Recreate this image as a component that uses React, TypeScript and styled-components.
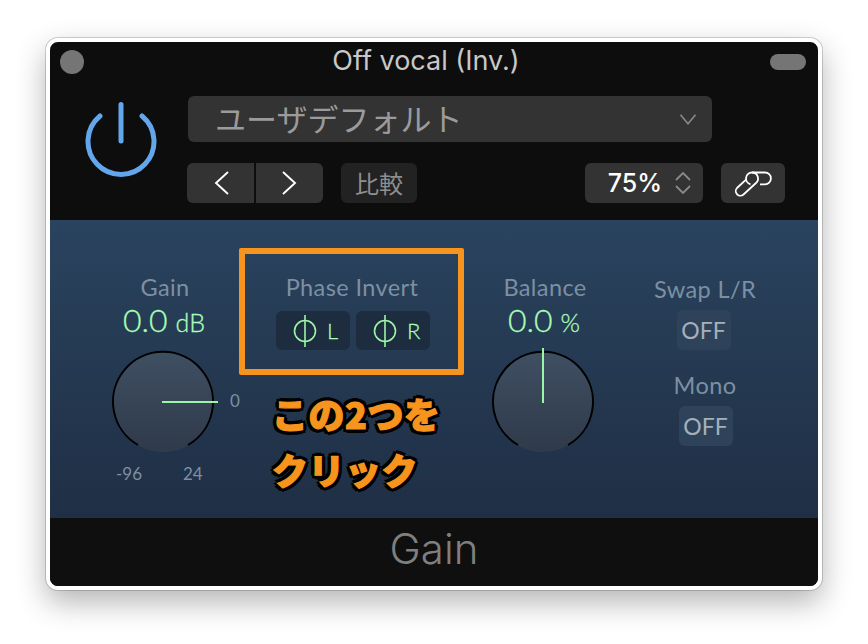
import styled, { createGlobalStyle } from "styled-components";

const GlobalStyle = createGlobalStyle`
  html, body {
    margin: 0;
    background: #fff;
  }
  * {
    box-sizing: border-box;
  }
`;

const Page = styled.div`
  width: 868px;
  height: 644px;
  padding: 38px 46px;
  overflow: hidden;
`;

const Window = styled.div`
  width: 776px;
  height: 552px;
  border: 4px solid #fff;
  border-radius: 12px;
  background: #0d0d0d;
  overflow: hidden;
  display: flex;
  flex-direction: column;
  box-shadow: 0 0 0 1px rgba(0, 0, 0, 0.17), 0 12px 30px rgba(0, 0, 0, 0.3);
`;

const Header = styled.header`
  height: 178px;
  flex: none;
  padding-top: 8px;
`;

const TitleRow = styled.div`
  display: flex;
  align-items: center;
  justify-content: space-between;
  height: 24px;
  padding: 0 12px 0 10px;
`;

const Dot = styled.span`
  width: 24px;
  height: 24px;
  border-radius: 50%;
  background: #757575;
`;

const Title = styled.div`
  font: 400 27px/24px Inter, "Liberation Sans", sans-serif;
  color: #c8c8c8;
  position: relative;
  top: -1px;
  left: -1px;
`;

const Pill = styled.span`
  width: 36px;
  height: 16px;
  border-radius: 8px;
  background: #757575;
`;

const Controls = styled.div`
  display: flex;
  padding: 22px 0 0 35px;
  gap: 28px;
`;

const PowerIcon = styled.svg`
  width: 74px;
  height: 80px;
  flex: none;
  margin-top: 4px;
`;

const ControlStack = styled.div`
  width: 598px;
  display: flex;
  flex-direction: column;
  gap: 21px;
`;

const Dropdown = styled.div`
  height: 46px;
  width: 524px;
  margin-left: 1px;
  background: #333;
  border-radius: 6px;
  display: flex;
  align-items: center;
  justify-content: space-between;
  padding: 0 14px 2px 27px;
  font: 400 31px/44px "Noto Sans CJK JP", sans-serif;
  color: #9b9b9b;
`;

const Toolbar = styled.div`
  display: flex;
  align-items: stretch;
  gap: 18px;
  height: 40px;
`;

const NavGroup = styled.div`
  width: 136px;
  display: flex;
  gap: 2px;
`;

const NavButton = styled.div`
  flex: 1;
  background: #333;
  display: flex;
  align-items: center;
  justify-content: center;
  &:first-child {
    border-radius: 6px 0 0 6px;
    padding-left: 2px;
  }
  &:last-child {
    border-radius: 0 6px 6px 0;
    padding-right: 2px;
  }
`;

const CompareButton = styled.div`
  width: 76px;
  background: #222;
  border-radius: 6px;
  font: 400 24px/40px "Noto Sans CJK JP", sans-serif;
  color: #8f8f8f;
  text-align: center;
`;

const ZoomBox = styled.div`
  width: 118px;
  margin-left: auto;
  background: #333;
  border-radius: 6px;
  display: flex;
  align-items: center;
  justify-content: flex-end;
  gap: 13px;
  padding-right: 12px;
  font: 500 25px/40px Inter, "Liberation Sans", sans-serif;
  color: #fff;
`;

const LinkButton = styled.div`
  width: 64px;
  background: #333;
  border-radius: 6px;
  display: flex;
  align-items: center;
  justify-content: center;
`;

const Panel = styled.main`
  flex: 1;
  display: flex;
  padding-left: 50px;
  background: linear-gradient(#2a435e, #1f2f45);
`;

const Column = styled.section<{ $width: number; $left?: number; $top?: number }>`
  width: ${(p) => p.$width}px;
  margin-left: ${(p) => p.$left ?? 0}px;
  flex: none;
  display: flex;
  flex-direction: column;
  align-items: center;
  padding-top: ${(p) => p.$top ?? 51}px;
  position: relative;
`;

const Label = styled.div`
  font: 400 23.5px/32px Lato, "Open Sans", sans-serif;
  color: #7c90a3;
  letter-spacing: 0.4px;
  white-space: nowrap;
`;

const Value = styled.div`
  margin-left: -2px;
  font: 300 32px/34px Lato, "Open Sans", sans-serif;
  color: #a8ffb6;
  -webkit-text-stroke: 0.3px #a8ffb6;
  white-space: nowrap;
  & > small {
    font-size: 25px;
    margin-left: 8px;
  }
`;

const Knob = styled.div`
  width: 120px;
  height: 116px;
  margin: 3px 0 0 -4px;
  position: relative;
`;

const KnobMark = styled.span<{ $x: number; $y: number }>`
  position: absolute;
  left: ${(p) => p.$x}px;
  top: ${(p) => p.$y}px;
  font: 400 17px/18px Lato, "Open Sans", sans-serif;
  color: #7c90a3;
`;

const Highlight = styled.div`
  position: absolute;
  left: -1px;
  top: 28px;
  width: 225px;
  height: 127px;
  border: 6px solid #f7941d;
  border-radius: 2px;
`;

const PhaseRow = styled.div`
  display: flex;
  gap: 6px;
  margin: 8px 0 0 2px;
`;

const PhaseButton = styled.div`
  width: 74px;
  height: 39px;
  border-radius: 6px;
  background: #1d2c3e;
  display: flex;
  align-items: center;
  gap: 10px;
  padding-left: 17px;
  font: 300 22px/39px Lato, "Open Sans", sans-serif;
  color: #a8ffb6;
  -webkit-text-stroke: 0.3px #a8ffb6;
`;

const Callout = styled.div`
  align-self: flex-start;
  margin: 35px 0 0 32px;
  font: 900 36px/56px "Noto Sans CJK JP", sans-serif;
  letter-spacing: 0.5px;
  color: #f7941d;
  -webkit-text-stroke: 1.2px #f7941d;
  text-shadow:
    4px 0 0 #000, -4px 0 0 #000, 0 4px 0 #000, 0 -4px 0 #000,
    3px 3px 0 #000, -3px 3px 0 #000, 3px -3px 0 #000, -3px -3px 0 #000;
  white-space: nowrap;
`;

const ToggleLabel = styled(Label)<{ $shift?: number }>`
  margin-left: ${(p) => p.$shift ?? 0}px;
`;

const Toggle = styled.div<{ $shift?: number }>`
  width: 54px;
  height: 40px;
  margin: 5px 0 19px ${(p) => p.$shift ?? 0}px;
  background: #2e435a;
  border-radius: 6px;
  font: 400 23px/40px Lato, "Open Sans", sans-serif;
  color: #a5b0bb;
  text-align: center;
`;

const Footer = styled.footer`
  height: 68px;
  flex: none;
  background: #0f0f0f;
  text-align: center;
  font: 300 42px/62px Inter, "Liberation Sans", sans-serif;
  color: #7f7f7f;
`;

function Chevron({ dir, size = 24, color = "#fff" }: { dir: "left" | "right" | "down"; size?: number; color?: string }) {
  const points = {
    left: "18,1 6,12 18,23",
    right: "6,1 18,12 6,23",
    down: "3,8 12,19 21,8",
  }[dir];
  return (
    <svg width={size} height={size} viewBox="0 0 24 24" fill="none">
      <polyline points={points} stroke={color} strokeWidth={1.9} />
    </svg>
  );
}

function PhaseIcon() {
  return (
    <svg width="24" height="34" viewBox="0 0 24 34" fill="none" stroke="#9bf5a8" strokeWidth="1.6">
      <circle cx="12" cy="17" r="10.5" />
      <line x1="12" y1="1" x2="12" y2="33" />
    </svg>
  );
}

function DialKnob({ id, pointer }: { id: string; pointer: [number, number, number, number] }) {
  const [x1, y1, x2, y2] = pointer;
  return (
    <svg width="120" height="116" viewBox="0 0 120 116" fill="none">
      <defs>
        <linearGradient id={id} x1="0" y1="0" x2="0" y2="1">
          <stop offset="0" stopColor="#3f4f62" />
          <stop offset="1" stopColor="#2f3a4a" />
        </linearGradient>
      </defs>
      <circle cx="60" cy="60" r="50" fill={`url(#${id})`} />
      <path d="M35 103 A50 50 0 1 1 85 103" stroke="#000" strokeWidth="2" />
      <line x1={x1} y1={y1} x2={x2} y2={y2} stroke="#9bf5a8" strokeWidth="2" />
    </svg>
  );
}

export default function App() {
  return (
    <Page>
      <GlobalStyle />
      <Window>
        <Header>
          <TitleRow>
            <Dot />
            <Title>Off vocal (Inv.)</Title>
            <Pill />
          </TitleRow>
          <Controls>
            <PowerIcon viewBox="0 0 74 80" fill="none" stroke="#63a6ec" strokeLinecap="round">
              <line x1="36" y1="4.5" x2="36" y2="41" strokeWidth="5" />
              <path d="M15 16 A33 33 0 1 0 57 16" strokeWidth="5" />
            </PowerIcon>
            <ControlStack>
              <Dropdown>
                ユーザデフォルト
                <Chevron dir="down" size={20} color="#8a8a8a" />
              </Dropdown>
              <Toolbar>
                <NavGroup>
                  <NavButton>
                    <Chevron dir="left" />
                  </NavButton>
                  <NavButton>
                    <Chevron dir="right" />
                  </NavButton>
                </NavGroup>
                <CompareButton>比較</CompareButton>
                <ZoomBox>
                  75%
                  <svg width="16" height="26" viewBox="0 0 16 26" fill="none" stroke="#8a8a8a" strokeWidth="1.8">
                    <polyline points="1,10 8,3 15,10" />
                    <polyline points="1,16 8,23 15,16" />
                  </svg>
                </ZoomBox>
                <LinkButton>
                  <svg width="64" height="40" viewBox="-4 0 64 40" fill="none" stroke="#fff" strokeWidth="1.8">
                    <path d="M21.3 16.3 L12 25 A4.6 4.6 0 0 0 18.5 31.5 L31 20 A6 6 0 0 0 27 9.5" />
                    <path d="M35 21.3 H40 A5.9 5.9 0 0 0 40 9.5 H27 A6 6 0 0 0 25.5 21.3" />
                  </svg>
                </LinkButton>
              </Toolbar>
            </ControlStack>
          </Controls>
        </Header>
        <Panel>
          <Column $width={130}>
            <Label>Gain</Label>
            <Value>
              0.0<small>dB</small>
            </Value>
            <Knob>
              <DialKnob id="gainKnob" pointer={[59, 60, 115, 60]} />
              <KnobMark $x={127} $y={50}>0</KnobMark>
              <KnobMark $x={13} $y={123}>-96</KnobMark>
              <KnobMark $x={80} $y={123}>24</KnobMark>
            </Knob>
          </Column>
          <Column $width={224} $left={10}>
            <Highlight />
            <Label>Phase Invert</Label>
            <PhaseRow>
              <PhaseButton>
                <PhaseIcon />L
              </PhaseButton>
              <PhaseButton>
                <PhaseIcon />R
              </PhaseButton>
            </PhaseRow>
            <Callout>
              この2つを
              <br />
              クリック
            </Callout>
          </Column>
          <Column $width={120} $left={21}>
            <Label>Balance</Label>
            <Value>
              0.0<small>%</small>
            </Value>
            <Knob>
              <DialKnob id="balanceKnob" pointer={[60, 61, 60, 6]} />
            </Knob>
          </Column>
          <Column $width={100} $left={49} $top={53}>
            <ToggleLabel $shift={2}>Swap L/R</ToggleLabel>
            <Toggle $shift={-1}>OFF</Toggle>
            <ToggleLabel $shift={2}>Mono</ToggleLabel>
            <Toggle $shift={3}>OFF</Toggle>
          </Column>
        </Panel>
        <Footer>Gain</Footer>
      </Window>
    </Page>
  );
}
